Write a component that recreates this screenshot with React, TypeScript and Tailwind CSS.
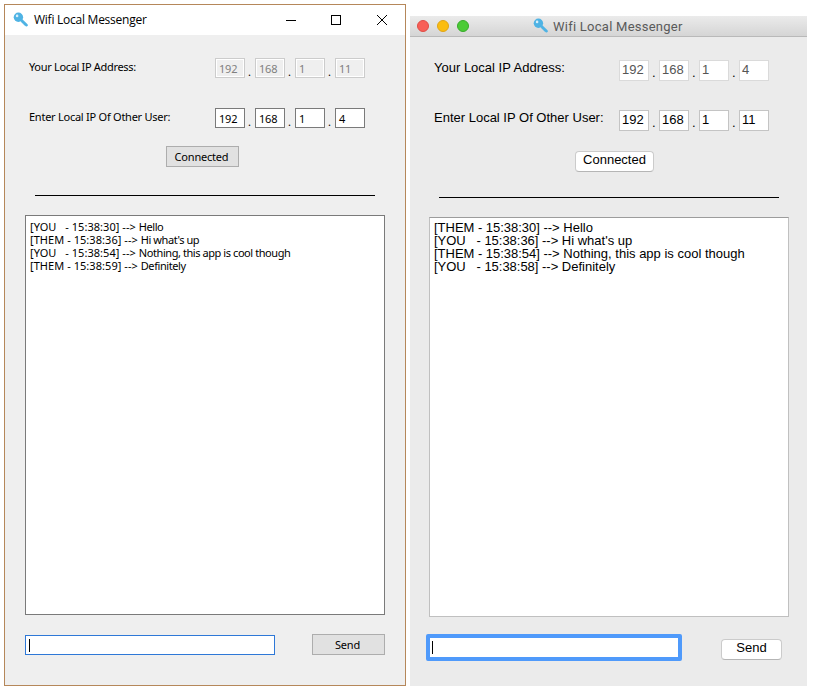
type Message = { from: string; time: string; text: string };

const winMessages: Message[] = [
  { from: 'YOU   ', time: '15:38:30', text: 'Hello' },
  { from: 'THEM ', time: '15:38:36', text: "Hi what's up" },
  { from: 'YOU   ', time: '15:38:54', text: 'Nothing, this app is cool though' },
  { from: 'THEM ', time: '15:38:59', text: 'Definitely' },
];

const macMessages: Message[] = [
  { from: 'THEM ', time: '15:38:30', text: 'Hello' },
  { from: 'YOU   ', time: '15:38:36', text: "Hi what's up" },
  { from: 'THEM ', time: '15:38:54', text: 'Nothing, this app is cool though' },
  { from: 'YOU   ', time: '15:38:58', text: 'Definitely' },
];

function KeyIcon() {
  return (
    <svg width="16" height="16" viewBox="0 0 16 16" className="block shrink-0">
      <path d="M7.4 7.2 13.6 13.2" stroke="#4fb3e4" strokeWidth="2.6" strokeLinecap="round" />
      <path d="M9 11 10.4 9.6M11 13 12.4 11.6" stroke="#4fb3e4" strokeWidth="1.4" />
      <circle cx="5.4" cy="5.2" r="4.7" fill="#4fb3e4" />
      <circle cx="4.1" cy="3.9" r="1.3" fill="#d9effa" />
    </svg>
  );
}

function IpRow({ parts, boxClass, dotClass }: { parts: string[]; boxClass: string; dotClass: string }) {
  return (
    <div className="flex">
      {parts.map((part, i) => (
        <div key={i} className="flex">
          {i > 0 && <span className={`w-[10px] shrink-0 ${dotClass}`}>.</span>}
          <div className={`w-[30px] border ${boxClass}`}>{part}</div>
        </div>
      ))}
    </div>
  );
}

function MessageList({ messages, stampClass = '' }: { messages: Message[]; stampClass?: string }) {
  return (
    <>
      {messages.map((m) => (
        <div key={m.time} className="whitespace-pre">
          <span className={stampClass}>
            [{m.from}- {m.time}] --&gt;{' '}
          </span>
          {m.text}
        </div>
      ))}
    </>
  );
}

function WindowsWindow() {
  const box = 'h-5 pl-[3px] leading-[20px]';
  const dot = 'pl-[3px] leading-[28px] h-5';
  return (
    <div className="mt-1 flex h-[682px] w-[402px] shrink-0 flex-col border border-[#b5875a] bg-[#efefef] font-['Noto_Sans',sans-serif] text-[11px] tracking-[-0.2px] text-black">
      <div className="flex h-[30px] shrink-0 items-center bg-white pl-2">
        <KeyIcon />
        <span className="ml-[5px] font-['Open_Sans',sans-serif] text-[12px] leading-4 tracking-[-0.25px]">Wifi Local Messenger</span>
        <svg width="104" height="12" viewBox="0 0 104 12" fill="none" stroke="black" className="ml-auto mr-[16px] block">
          <path d="M1 6.5h10M46.5 1.5h9v9h-9z" shapeRendering="crispEdges" />
          <path d="m92 1 10 10M102 1 92 11" />
        </svg>
      </div>
      <div className="flex flex-col pl-5 pr-5 pt-[23px]">
        <div className="flex h-5 justify-between pl-1 pr-5">
          <span className="leading-[17px] tracking-[-0.32px]">Your Local IP Address:</span>
          <IpRow
            parts={['192', '168', '1', '11']}
            boxClass={`${box} border-[#cccccc] text-[#808080] shadow-[inset_0_0_0_1px_white]`}
            dotClass={dot}
          />
        </div>
        <div className="mt-[30px] flex h-5 justify-between pl-1 pr-5">
          <span className="leading-[17px] tracking-[-0.25px]">Enter Local IP Of Other User:</span>
          <IpRow parts={['192', '168', '1', '4']} boxClass={`${box} border-[#7a7a7a] bg-white`} dotClass={dot} />
        </div>
        <button className="ml-[141px] mt-[18px] h-[21px] w-[73px] border border-[#adadad] bg-[#e1e1e1] pr-[2px] leading-[19px]">
          Connected
        </button>
        <div className="ml-[10px] mt-7 h-px w-[340px] bg-black" />
        <div className="mt-[19px] h-[400px] w-[360px] border border-[#7a7a7a] bg-white pl-1 pt-1 leading-[13px] tracking-[-0.43px]">
          <MessageList messages={winMessages} stampClass="tracking-[0.05px]" />
        </div>
        <div className="mt-[19px] flex items-end justify-between">
          <div className="h-5 w-[250px] border border-[#2e78d7] bg-white pl-[3px] pt-[3px]">
            <div className="h-[13px] w-px bg-black" />
          </div>
          <button className="h-[21px] w-[73px] border border-[#adadad] bg-[#e1e1e1] pr-[2px] leading-[20px]">Send</button>
        </div>
      </div>
    </div>
  );
}

function MacWindow() {
  const box = 'h-[21px] pl-[2px] leading-[18px] bg-white';
  const dot = 'pl-[3px] leading-[25px] h-[21px]';
  const button = 'h-[21px] rounded-[4px] border border-[#cbcbcb] border-b-[#b5b5b5] bg-white leading-[16px] pb-[3px]';
  return (
    <div className="mt-4 flex h-[670px] w-[397px] shrink-0 flex-col bg-[#ebebeb] font-['Liberation_Sans',sans-serif] text-[13px] text-black">
      <div className="flex h-[21px] shrink-0 items-center border-b border-[#b9b9b9] bg-linear-to-b from-[#ebebeb] to-[#d5d5d5] pl-[7px]">
        <div className="flex gap-2">
          <div className="size-3 rounded-full border border-[#df4d46] bg-[#f85f57]" />
          <div className="size-3 rounded-full border border-[#e0a516] bg-[#fbbd10]" />
          <div className="size-3 rounded-full border border-[#37ab2a] bg-[#4bcb36]" />
        </div>
        <div className="ml-[64px] flex items-center">
          <KeyIcon />
          <span className="ml-1 mt-px font-[Roboto,sans-serif] text-[13px] leading-4 tracking-[0.25px] text-[#5a5a5a]">
            Wifi Local Messenger
          </span>
        </div>
      </div>
      <div className="flex flex-col pl-[19px] pt-[23px]">
        <div className="flex h-[21px] justify-between pl-[5px] pr-[38px]">
          <span className="leading-[16px]">Your Local IP Address:</span>
          <IpRow parts={['192', '168', '1', '4']} boxClass={`${box} border-[#dadada] text-[#555555]`} dotClass={dot} />
        </div>
        <div className="mt-[29px] flex h-[21px] justify-between pl-[5px] pr-[38px]">
          <span className="leading-[16px]">Enter Local IP Of Other User:</span>
          <IpRow parts={['192', '168', '1', '11']} boxClass={`${box} border-[#c4c4c4]`} dotClass={dot} />
        </div>
        <button className={`${button} ml-[146px] mt-5 w-[79px]`}>Connected</button>
        <div className="ml-[10px] mt-[25px] h-px w-[340px] bg-black" />
        <div className="mt-[19px] h-[400px] w-[360px] border border-[#c0c0c0] border-t-[#9c9c9c] bg-white pl-1 pt-[3px] leading-[13px]">
          <MessageList messages={macMessages} stampClass="tracking-[-0.02px]" />
        </div>
        <div className="-ml-[3px] mt-[17px] flex">
          <div className="h-[27px] w-[256px] rounded-[2px] border-4 border-[#4f9afb] bg-white pl-[2px] pt-[3px]">
            <div className="h-[13px] w-px bg-black" />
          </div>
          <button className={`${button} ml-[39px] mt-[5px] w-[61px]`}>Send</button>
        </div>
      </div>
    </div>
  );
}

export default function App() {
  return (
    <div className="flex h-[694px] w-[814px] gap-1 overflow-hidden bg-white pl-1">
      <WindowsWindow />
      <MacWindow />
    </div>
  );
}
